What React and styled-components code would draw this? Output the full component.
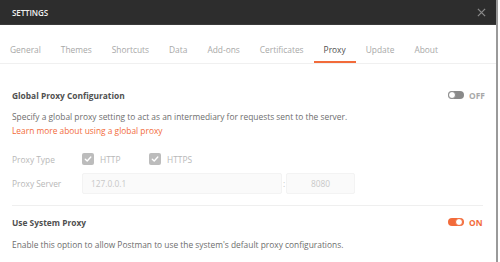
import React from "react";
import styled, { createGlobalStyle } from "styled-components";

const Global = createGlobalStyle`
  html, body { margin: 0; padding: 0; background: #fff; }
  body { font-family: "Open Sans", "Noto Sans", sans-serif; -webkit-font-smoothing: antialiased; }
`;

const FS = "8.4px";

const Window = styled.div`
  width: 496px;
  height: 262px;
  border-right: 2px solid #9a9a9a;
  background: #fff;
  overflow: hidden;
  display: flex;
  flex-direction: column;
`;

const Header = styled.div`
  height: 25px;
  background: #2d2d2d;
  border-bottom: 1px solid #3a3a3a;
  box-sizing: border-box;
  display: flex;
  align-items: center;
  justify-content: space-between;
  padding: 0 10px 0 12px;
`;

const HeaderTitle = styled.div`
  color: #f0f0f0;
  font-size: 8px;
  font-weight: 600;
  letter-spacing: -0.1px;
`;

const CloseIcon = styled.svg`
  width: 9px;
  height: 9px;
  display: block;
`;

const TabBar = styled.div`
  display: flex;
  border-bottom: 1px solid #f0f0f0;
`;

const Tab = styled.div`
  padding: 19px 10px 5px;
  line-height: 12px;
  font-size: 8.4px;
  color: ${(p) => (p.$active ? "#505050" : "#a8a8a8")};
  border-bottom: 2px solid ${(p) => (p.$active ? "#f26b3a" : "transparent")};
`;

const Content = styled.div`
  padding: 0 13px 0 12px;
  display: flex;
  flex-direction: column;
`;

const TitleRow = styled.div`
  display: flex;
  justify-content: space-between;
  align-items: center;
  height: 12px;
  margin-top: ${(p) => p.$top}px;
`;

const Title = styled.div`
  font-size: ${FS};
  font-weight: 700;
  color: #505050;
`;

const ToggleWrap = styled.div`
  display: flex;
  align-items: center;
  gap: 5px;
`;

const Track = styled.div`
  width: 16px;
  height: 8px;
  border-radius: 4px;
  background: ${(p) => (p.$on ? "#f26b3a" : "#8a8a8a")};
  position: relative;
`;

const Knob = styled.div`
  position: absolute;
  top: 0;
  ${(p) => (p.$on ? "right: 1px;" : "left: 0;")}
  width: 8px;
  height: 8px;
  box-sizing: border-box;
  border-radius: 50%;
  background: #fff;
  border: 1px solid ${(p) => (p.$on ? "#f26b3a" : "#8a8a8a")};
`;

const ToggleLabel = styled.div`
  font-size: ${FS};
  font-weight: 700;
  color: ${(p) => (p.$on ? "#f26b3a" : "#a8a8a8")};
  width: 14px;
`;

const Desc = styled.div`
  font-size: ${FS};
  line-height: 14px;
  color: #6e6e6e;
  margin-top: ${(p) => p.$top}px;
`;

const Link = styled.div`
  font-size: ${FS};
  line-height: 14px;
  color: #f26b3a;
`;

const FieldRow = styled.div`
  display: flex;
  align-items: center;
  margin-top: ${(p) => p.$top}px;
  height: ${(p) => p.$h}px;
`;

const FieldLabel = styled.div`
  width: 70px;
  font-size: ${FS};
  color: #b8b8b8;
`;

const CheckGroup = styled.div`
  display: flex;
  align-items: center;
  gap: 6px;
  width: ${(p) => p.$w}px;
  font-size: ${FS};
  color: #b8b8b8;
`;

const Box = styled.div`
  width: 12px;
  height: 12px;
  border-radius: 2px;
  background: #bcbcbc;
  display: flex;
  align-items: center;
  justify-content: center;
`;

const Input = styled.div`
  width: ${(p) => p.$w}px;
  height: 21px;
  box-sizing: border-box;
  background: #fafafa;
  border: 1px solid #f3f3f3;
  border-radius: 2px;
  font-size: ${FS};
  color: #c8c8c8;
  display: flex;
  align-items: center;
  justify-content: ${(p) => (p.$center ? "center" : "flex-start")};
  padding-left: ${(p) => (p.$center ? 0 : 8)}px;
`;

const Colon = styled.div`
  width: 4px;
  text-align: center;
  font-size: ${FS};
  color: #c4c4c4;
`;

const Divider = styled.div`
  height: 1px;
  background: #efefef;
  margin-top: 11px;
`;

const Check = () => (
  <svg width="8" height="8" viewBox="0 0 8 8">
    <path d="M1.3 4.2 L3.2 6 L6.8 2" fill="none" stroke="#fff" strokeWidth="1.4" strokeLinecap="round" strokeLinejoin="round" />
  </svg>
);

const Toggle = ({ on }) => (
  <ToggleWrap>
    <Track $on={on}>
      <Knob $on={on} />
    </Track>
    <ToggleLabel $on={on}>{on ? "ON" : "OFF"}</ToggleLabel>
  </ToggleWrap>
);

const tabs = ["General", "Themes", "Shortcuts", "Data", "Add-ons", "Certificates", "Proxy", "Update", "About"];

export default function App() {
  return (
    <>
      <Global />
      <Window>
        <Header>
          <HeaderTitle>SETTINGS</HeaderTitle>
          <CloseIcon viewBox="0 0 10 10">
            <path d="M1 1 L9 9 M9 1 L1 9" stroke="#8a8a8a" strokeWidth="1.4" />
          </CloseIcon>
        </Header>
        <TabBar>
          {tabs.map((t) => (
            <Tab key={t} $active={t === "Proxy"}>{t}</Tab>
          ))}
        </TabBar>
        <Content>
          <TitleRow $top={25}>
            <Title>Global Proxy Configuration</Title>
            <Toggle on={false} />
          </TitleRow>
          <Desc $top={9}>Specify a global proxy setting to act as an intermediary for requests sent to the server.</Desc>
          <Link>Learn more about using a global proxy</Link>
          <FieldRow $top={14} $h={14}>
            <FieldLabel>Proxy Type</FieldLabel>
            <CheckGroup $w={67}>
              <Box><Check /></Box>
              HTTP
            </CheckGroup>
            <CheckGroup $w={80}>
              <Box><Check /></Box>
              HTTPS
            </CheckGroup>
          </FieldRow>
          <FieldRow $top={7} $h={21}>
            <FieldLabel>Proxy Server</FieldLabel>
            <Input $w={200}>127.0.0.1</Input>
            <Colon>:</Colon>
            <Input $w={69} $center>8080</Input>
          </FieldRow>
          <Divider />
          <TitleRow $top={10}>
            <Title>Use System Proxy</Title>
            <Toggle on={true} />
          </TitleRow>
          <Desc $top={10}>Enable this option to allow Postman to use the system's default proxy configurations.</Desc>
        </Content>
      </Window>
    </>
  );
}
